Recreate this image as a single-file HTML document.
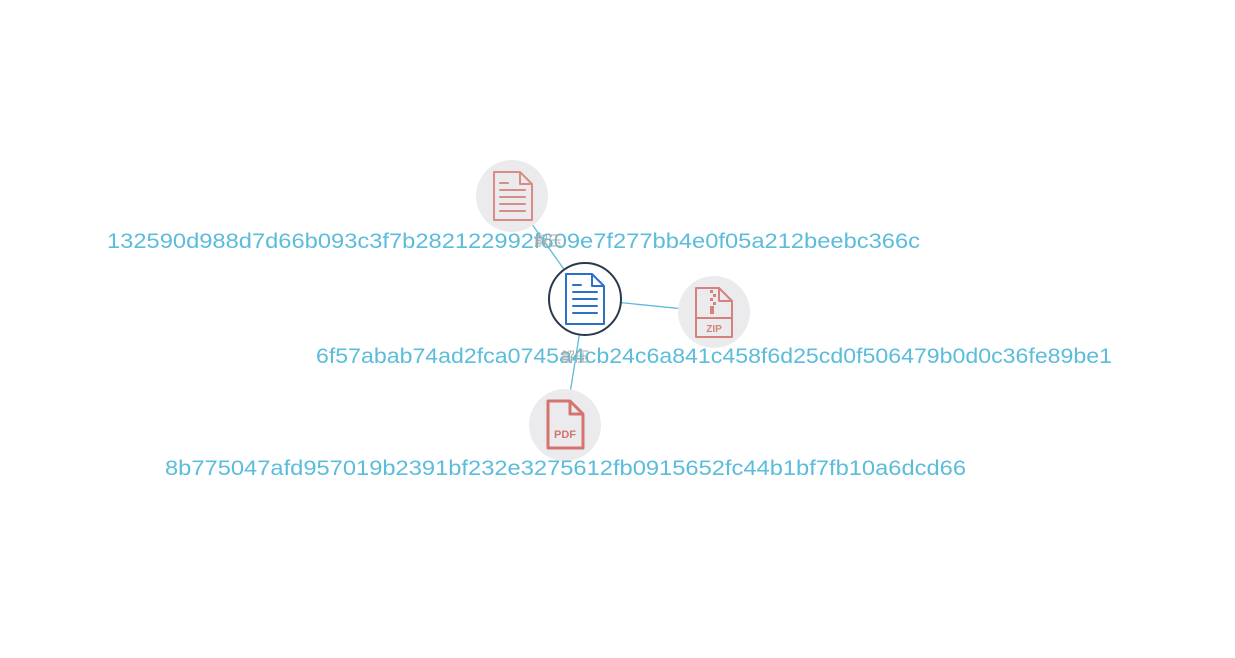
<!DOCTYPE html>
<html><head><meta charset="utf-8"><style>html,body{margin:0;padding:0;background:#fff;}svg{display:block}</style></head>
<body>
<svg width="1235" height="658" viewBox="0 0 1235 658" xmlns="http://www.w3.org/2000/svg">
<g stroke="#5bbcdc" stroke-width="1.3">
<line x1="585" y1="299" x2="512" y2="196"/>
<line x1="585" y1="299" x2="714" y2="312"/>
<line x1="585" y1="299" x2="565" y2="425"/>
</g>
<circle cx="512" cy="196" r="36" fill="#ebebed"/>
<circle cx="714" cy="312" r="36" fill="#ebebed"/>
<circle cx="565" cy="425" r="36" fill="#ebebed"/>
<circle cx="585" cy="299" r="36" fill="#fff" stroke="#2a3a4d" stroke-width="2"/>
<g fill="none" stroke="#d98b86" stroke-width="2" stroke-linejoin="round" stroke-linecap="round">
<path d="M494 172 H520 L532 184 V220 H494 Z M520 172 V184 H532"/>
<path d="M500 183 H508 M500 190 H525 M500 197 H525 M500 204 H525 M500 211 H525"/>
</g>
<g fill="none" stroke="#2a72c8" stroke-width="2" stroke-linejoin="round" stroke-linecap="round">
<path d="M566 274 H592 L604 286 V324 H566 Z M592 274 V286 H604"/>
<path d="M573 285 H581 M573 292 H597 M573 299 H597 M573 306 H597 M573 313 H597"/>
</g>
<g fill="none" stroke="#d5827e" stroke-width="2" stroke-linejoin="round">
<path d="M696 288 H719 L732 301 V337 H696 Z M719 288 V301 H732 M696 318 H732"/>
</g>
<g fill="#d5827e"><rect x="710" y="290" width="3" height="3"/><rect x="713" y="294" width="3" height="3"/><rect x="710" y="298" width="3" height="3"/><rect x="713" y="302" width="3" height="3"/><rect x="710" y="306" width="4" height="8"/></g>
<text x="714" y="332" font-family="Liberation Sans, sans-serif" font-size="10" font-weight="bold" fill="#d5827e" text-anchor="middle">ZIP</text>
<g fill="none" stroke="#d5736e" stroke-width="3" stroke-linejoin="round">
<path d="M548 401 H570 L583 414 V448 H548 Z M570 401 V414 H583"/>
</g>
<text x="565" y="438" font-family="Liberation Sans, sans-serif" font-size="11" font-weight="bold" fill="#d5736e" text-anchor="middle">PDF</text>
<g font-family="Liberation Sans, sans-serif" font-size="21" fill="#5bbcdc">
<text x="107" y="248" textLength="813" lengthAdjust="spacingAndGlyphs">132590d988d7d66b093c3f7b282122992f609e7f277bb4e0f05a212beebc366c</text>
<text x="316" y="363" textLength="796" lengthAdjust="spacingAndGlyphs">6f57abab74ad2fca0745a4cb24c6a841c458f6d25cd0f506479b0d0c36fe89be1</text>
<text x="165" y="475" textLength="801" lengthAdjust="spacingAndGlyphs">8b775047afd957019b2391bf232e3275612fb0915652fc44b1bf7fb10a6dcd66</text>
</g>
<g font-family="Liberation Sans, Noto Sans CJK SC, sans-serif" font-size="14" fill="#aaa" text-anchor="middle">
<text x="548" y="246">解压</text>
<text x="575" y="362">解压</text>
</g>
</svg>
</body></html>
